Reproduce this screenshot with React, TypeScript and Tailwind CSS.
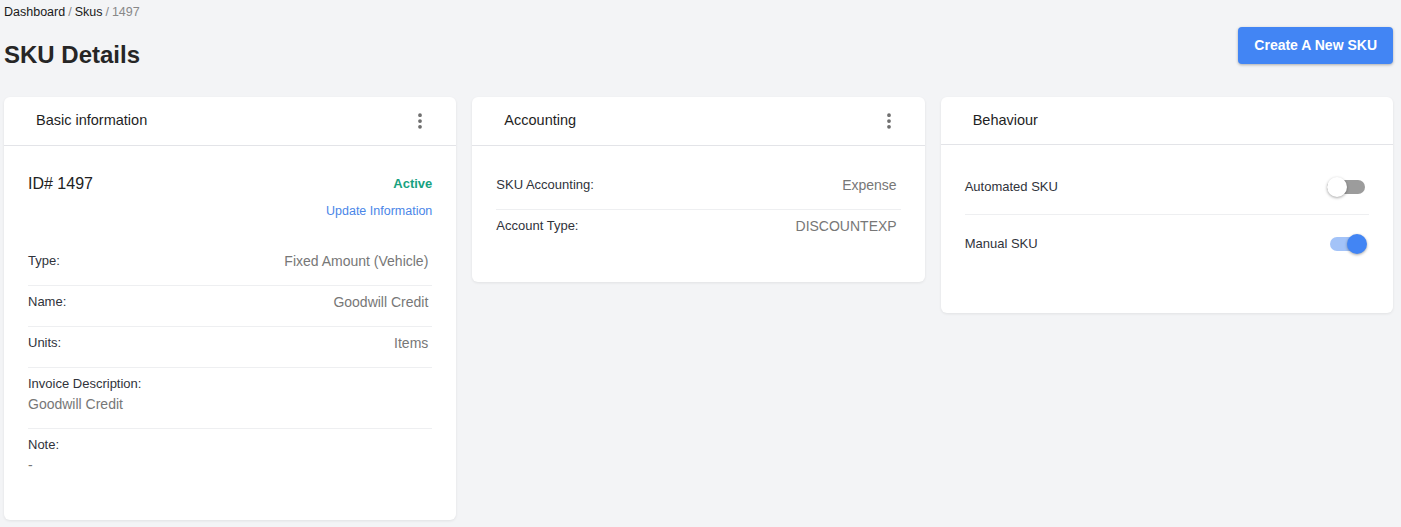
import { EllipsisVertical } from "lucide-react";

const font = { fontFamily: '"Liberation Sans", Arial, sans-serif' };

function CardHeader({ title, menu = true }: { title: string; menu?: boolean }) {
  return (
    <div
      className={`flex items-center justify-between border-b border-[#e3e4e8] pl-8 pr-[26px] ${
        menu ? "h-[49px]" : "h-12"
      }`}
    >
      <span className="text-[14.5px] text-[#1f1f1f]">{title}</span>
      {menu && <EllipsisVertical className="h-5 w-5 text-[#6b6b6b]" strokeWidth={2.5} />}
    </div>
  );
}

function Row({
  label,
  value,
  last = false,
  stacked = false,
}: {
  label: string;
  value: string;
  last?: boolean;
  stacked?: boolean;
}) {
  return (
    <div
      className={`pt-[6px] pb-[14px] ${last ? "" : "border-b border-[#eeeff1]"} ${
        stacked ? "flex flex-col" : "flex items-center justify-between"
      }`}
    >
      <span className="text-[13px] leading-5 text-[#30333b]">{label}</span>
      <span className={`text-[14px] leading-5 text-[#777] ${stacked ? "" : "mr-1"}`}>{value}</span>
    </div>
  );
}

function Switch({ on }: { on: boolean }) {
  return (
    <div className="relative h-5 w-[40px]">
      <div
        className={`absolute top-[3px] h-[14px] rounded-full ${
          on ? "left-[3px] w-[34px] bg-[#a3c3f8]" : "left-0 w-[38px] bg-[#9c9c9c]"
        }`}
      />
      <div
        className={`absolute top-0 h-5 w-5 rounded-full shadow-[0_1px_3px_rgba(0,0,0,0.35)] ${
          on ? "right-0 bg-[#4285f4]" : "left-0 bg-white"
        }`}
      />
    </div>
  );
}

export default function App() {
  return (
    <div className="min-h-[527px] bg-[#f3f4f6] pl-1 pr-2" style={font}>
      <div className="flex items-center gap-[3px] pt-[4px] text-[12.5px] leading-4">
        <span className="text-[#1a1a1a]">Dashboard</span>
        <span className="text-[#888]">/</span>
        <span className="text-[#1a1a1a]">Skus</span>
        <span className="text-[#888]">/</span>
        <span className="text-[#888]">1497</span>
      </div>

      <div className="mt-[7px] flex items-start justify-between">
        <h1 className="mt-[12px] text-2xl leading-8 font-bold text-[#262626]">SKU Details</h1>
        <button className="h-[37px] rounded bg-[#4285f4] px-4 text-[14px] font-bold text-white shadow-[0_1px_3px_rgba(0,0,0,0.3)]">
          Create A New SKU
        </button>
      </div>

      <div className="mt-[26px] grid grid-cols-3 items-start gap-4">
        <div className="rounded-md bg-white shadow-[0_1px_3px_rgba(0,0,0,0.08)]">
          <CardHeader title="Basic information" />
          <div className="px-6 pt-[26px] pb-[31px]">
            <div className="flex items-center justify-between">
              <span className="text-base leading-6 text-[#222]">ID# 1497</span>
              <span className="text-[13px] font-bold text-[#17a27f]">Active</span>
            </div>
            <div className="mt-[7px] text-right text-[12.5px] leading-4 text-[#4a86e8]">
              Update Information
            </div>
            <div className="mt-[26px]">
              <Row label="Type:" value="Fixed Amount (Vehicle)" />
              <Row label="Name:" value="Goodwill Credit" />
              <Row label="Units:" value="Items" />
              <Row label="Invoice Description:" value="Goodwill Credit" stacked />
              <Row label="Note:" value="-" stacked last />
            </div>
          </div>
        </div>

        <div className="rounded-md bg-white shadow-[0_1px_3px_rgba(0,0,0,0.08)]">
          <CardHeader title="Accounting" />
          <div className="px-6 pt-[23px] pb-[32px]">
            <Row label="SKU Accounting:" value="Expense" />
            <Row label="Account Type:" value="DISCOUNTEXP" last />
          </div>
        </div>

        <div className="rounded-md bg-white shadow-[0_1px_3px_rgba(0,0,0,0.08)]">
          <CardHeader title="Behaviour" menu={false} />
          <div className="px-6 pt-[15px] pb-[40px]">
            <div className="flex items-center justify-between border-b border-[#eeeff1] py-[17px] pr-[2px]">
              <span className="text-[13px] leading-5 text-[#30333b]">Automated SKU</span>
              <Switch on={false} />
            </div>
            <div className="flex items-center justify-between pt-[19px] pb-[19px] pr-[2px]">
              <span className="text-[13px] leading-5 text-[#30333b]">Manual SKU</span>
              <Switch on />
            </div>
          </div>
        </div>
      </div>
    </div>
  );
}
